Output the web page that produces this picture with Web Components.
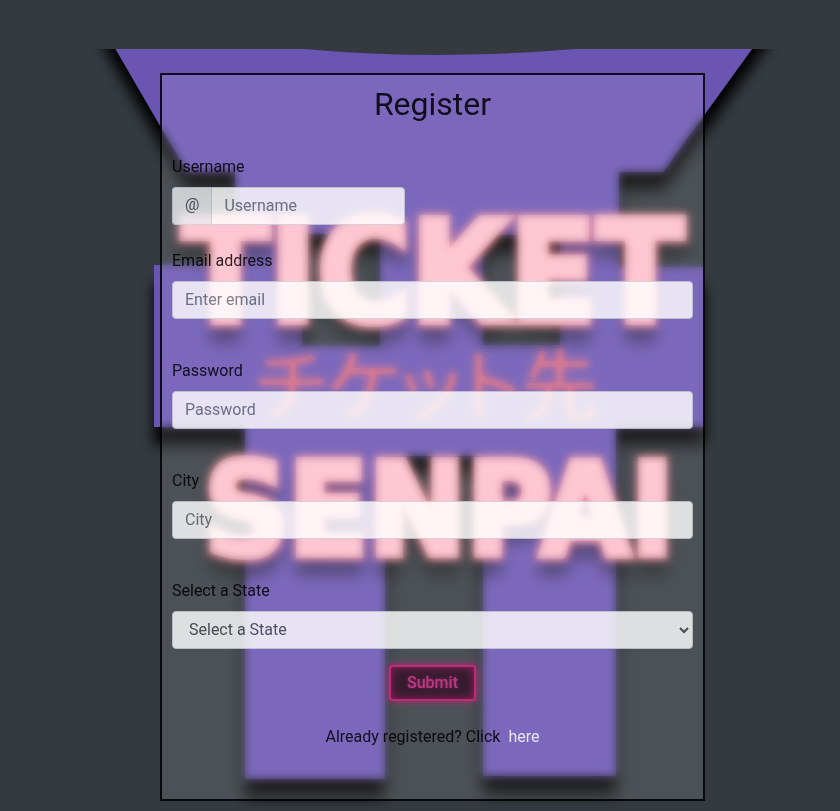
<!DOCTYPE html>
<html lang="en">
<head>
<meta charset="utf-8">
<title>Register - Ticket Senpai</title>
<style>
body { margin: 0; background: #343a40; color: #000; font: 16px/24px Roboto, sans-serif; }
</style>
</head>
<body>
<register-page></register-page>
<script>
const define = (name, html, setup) => customElements.define(name, class extends HTMLElement {
  connectedCallback() {
    if (this.shadowRoot) return;
    this.attachShadow({ mode: "open" }).innerHTML = html;
    if (setup) setup(this, this.shadowRoot);
  }
});

define("torii-backdrop", `
<style>
:host { display: block; overflow: hidden; }
svg { display: block; width: 100%; height: 100%; }
.word { font-family: "DejaVu Sans Condensed", "Liberation Sans", sans-serif; font-weight: 700; fill: #ffc0cb; stroke: #ffc0cb; stroke-width: 6; text-anchor: middle; filter: url(#glow); }
.kana { font-family: "Noto Sans CJK JP", sans-serif; font-weight: 400; font-size: 78px; font-feature-settings: "palt"; fill: #e3697c; text-anchor: middle; filter: url(#soft); }
</style>
<svg viewBox="0 49 840 762" preserveAspectRatio="xMidYMin slice" role="img" aria-label="Ticket Senpai">
<defs>
<filter id="shade" x="-10%" y="-10%" width="120%" height="120%"><feDropShadow dx="0" dy="18" stdDeviation="7" flood-color="#000"/></filter>
<filter id="glow" x="-10%" y="-20%" width="120%" height="150%">
<feMorphology in="SourceAlpha" operator="dilate" radius="1" result="fat"/>
<feGaussianBlur in="fat" stdDeviation="2" result="halo"/>
<feFlood flood-color="#f0606e"/><feComposite in2="halo" operator="in" result="red"/>
<feGaussianBlur in="SourceAlpha" stdDeviation="7"/><feOffset dy="18" result="low"/>
<feFlood flood-color="#000" flood-opacity=".4"/><feComposite in2="low" operator="in" result="dark"/>
<feMerge><feMergeNode in="dark"/><feMergeNode in="red"/><feMergeNode in="SourceGraphic"/></feMerge>
</filter>
<filter id="soft" x="-10%" y="-20%" width="120%" height="140%"><feDropShadow dx="0" dy="0" stdDeviation="4" flood-color="#e3697c" flood-opacity=".5"/></filter>
</defs>
<path filter="url(#shade)" fill="#6b54b3" fill-rule="evenodd" d="M97 17 H303 V49 Q439 61 575 49 V17 H775 L663 172 H619 V267 H704 V427 H616 V776 H483 V456 H385 V779 H245 V427 H154 V265 H235 V172 H187Z M302 234 V346 H380 V234Z M483 235 V345 H560 V235Z"/>
<text class="word" x="433" y="322" font-size="142">TICKET</text>
<text class="kana" x="427" y="415" lang="ja">チケット先</text>
<text class="word" x="439" y="555" font-size="130">SENPAI</text>
</svg>`);

define("form-field", `
<style>
:host { display: block; }
label { display: block; margin-bottom: 8px; }
.group { display: flex; }
.prefix { display: none; box-sizing: border-box; padding: 5px 12px 7px; color: #495057; background: #e9ecef; border: 1px solid #ced4da; border-right: 0; border-radius: 4px 0 0 4px; }
input, select { box-sizing: border-box; flex: 1; min-width: 0; width: 100%; height: 38px; margin: 0; padding: 5px 12px 7px; font: inherit; color: #495057; background: #fff; border: 1px solid #ced4da; border-radius: 4px; }
input::placeholder { color: #6c757d; opacity: 1; }
:host([prefix]) .prefix { display: block; }
:host([prefix]) input { border-radius: 0 4px 4px 0; }
:host([prefix]) .group { width: 233px; }
</style>
<label for="control"></label>
<div class="group"><span class="prefix"></span></div>`, (host, root) => {
  const type = host.getAttribute("type");
  const text = host.getAttribute("placeholder");
  const control = document.createElement(type === "select" ? "select" : "input");
  control.id = "control";
  if (type === "select") control.add(new Option(text, ""));
  else { control.type = type; control.placeholder = text; }
  root.querySelector("label").textContent = host.getAttribute("label");
  root.querySelector(".prefix").textContent = host.getAttribute("prefix") || "";
  root.querySelector(".group").append(control);
});

define("neon-button", `
<style>
:host { display: block; }
button { display: block; height: 36px; padding: 0 16px; font: 500 16px/24px Roboto, sans-serif; color: #d23c90; text-shadow: 0 0 3px #a0246b; background: #39172d; border: 2px solid #e02688; border-radius: 4px; box-shadow: 0 0 8px #d42682, inset 0 0 8px #a82069; }
</style>
<button type="submit"><slot></slot></button>`);

define("register-card", `
<style>
:host { display: block; box-sizing: border-box; padding: 10px; border: 2px solid #000; background: rgb(255 255 255 / .14); opacity: .84; backdrop-filter: blur(4px); }
form { display: flex; flex-direction: column; gap: 40px; }
h1 { margin: 0 0 -8px; font-size: 32px; line-height: 38px; font-weight: 400; text-align: center; }
form-field[prefix] { margin-bottom: -16px; }
neon-button { align-self: center; margin-top: -24px; }
p { margin: -16px 0 40px; text-align: center; }
a { color: #fff; text-decoration: none; margin-left: 4px; }
</style>
<form>
<h1>Register</h1>
<form-field label="Username" type="text" placeholder="Username" prefix="@"></form-field>
<form-field label="Email address" type="email" placeholder="Enter email"></form-field>
<form-field label="Password" type="password" placeholder="Password"></form-field>
<form-field label="City" type="text" placeholder="City"></form-field>
<form-field label="Select a State" type="select" placeholder="Select a State"></form-field>
<neon-button>Submit</neon-button>
<p>Already registered? Click <a href="#login">here</a></p>
</form>`);

define("register-page", `
<style>
:host { display: block; padding-top: 49px; }
main { display: grid; }
torii-backdrop, .front { grid-area: 1 / 1; min-width: 0; }
torii-backdrop { contain: size; }
.front { display: flex; justify-content: center; padding: 24px 0 10px 25px; }
register-card { width: 545px; max-width: 100%; }
</style>
<main>
<torii-backdrop></torii-backdrop>
<div class="front"><register-card></register-card></div>
</main>`);
</script>
</body>
</html>
